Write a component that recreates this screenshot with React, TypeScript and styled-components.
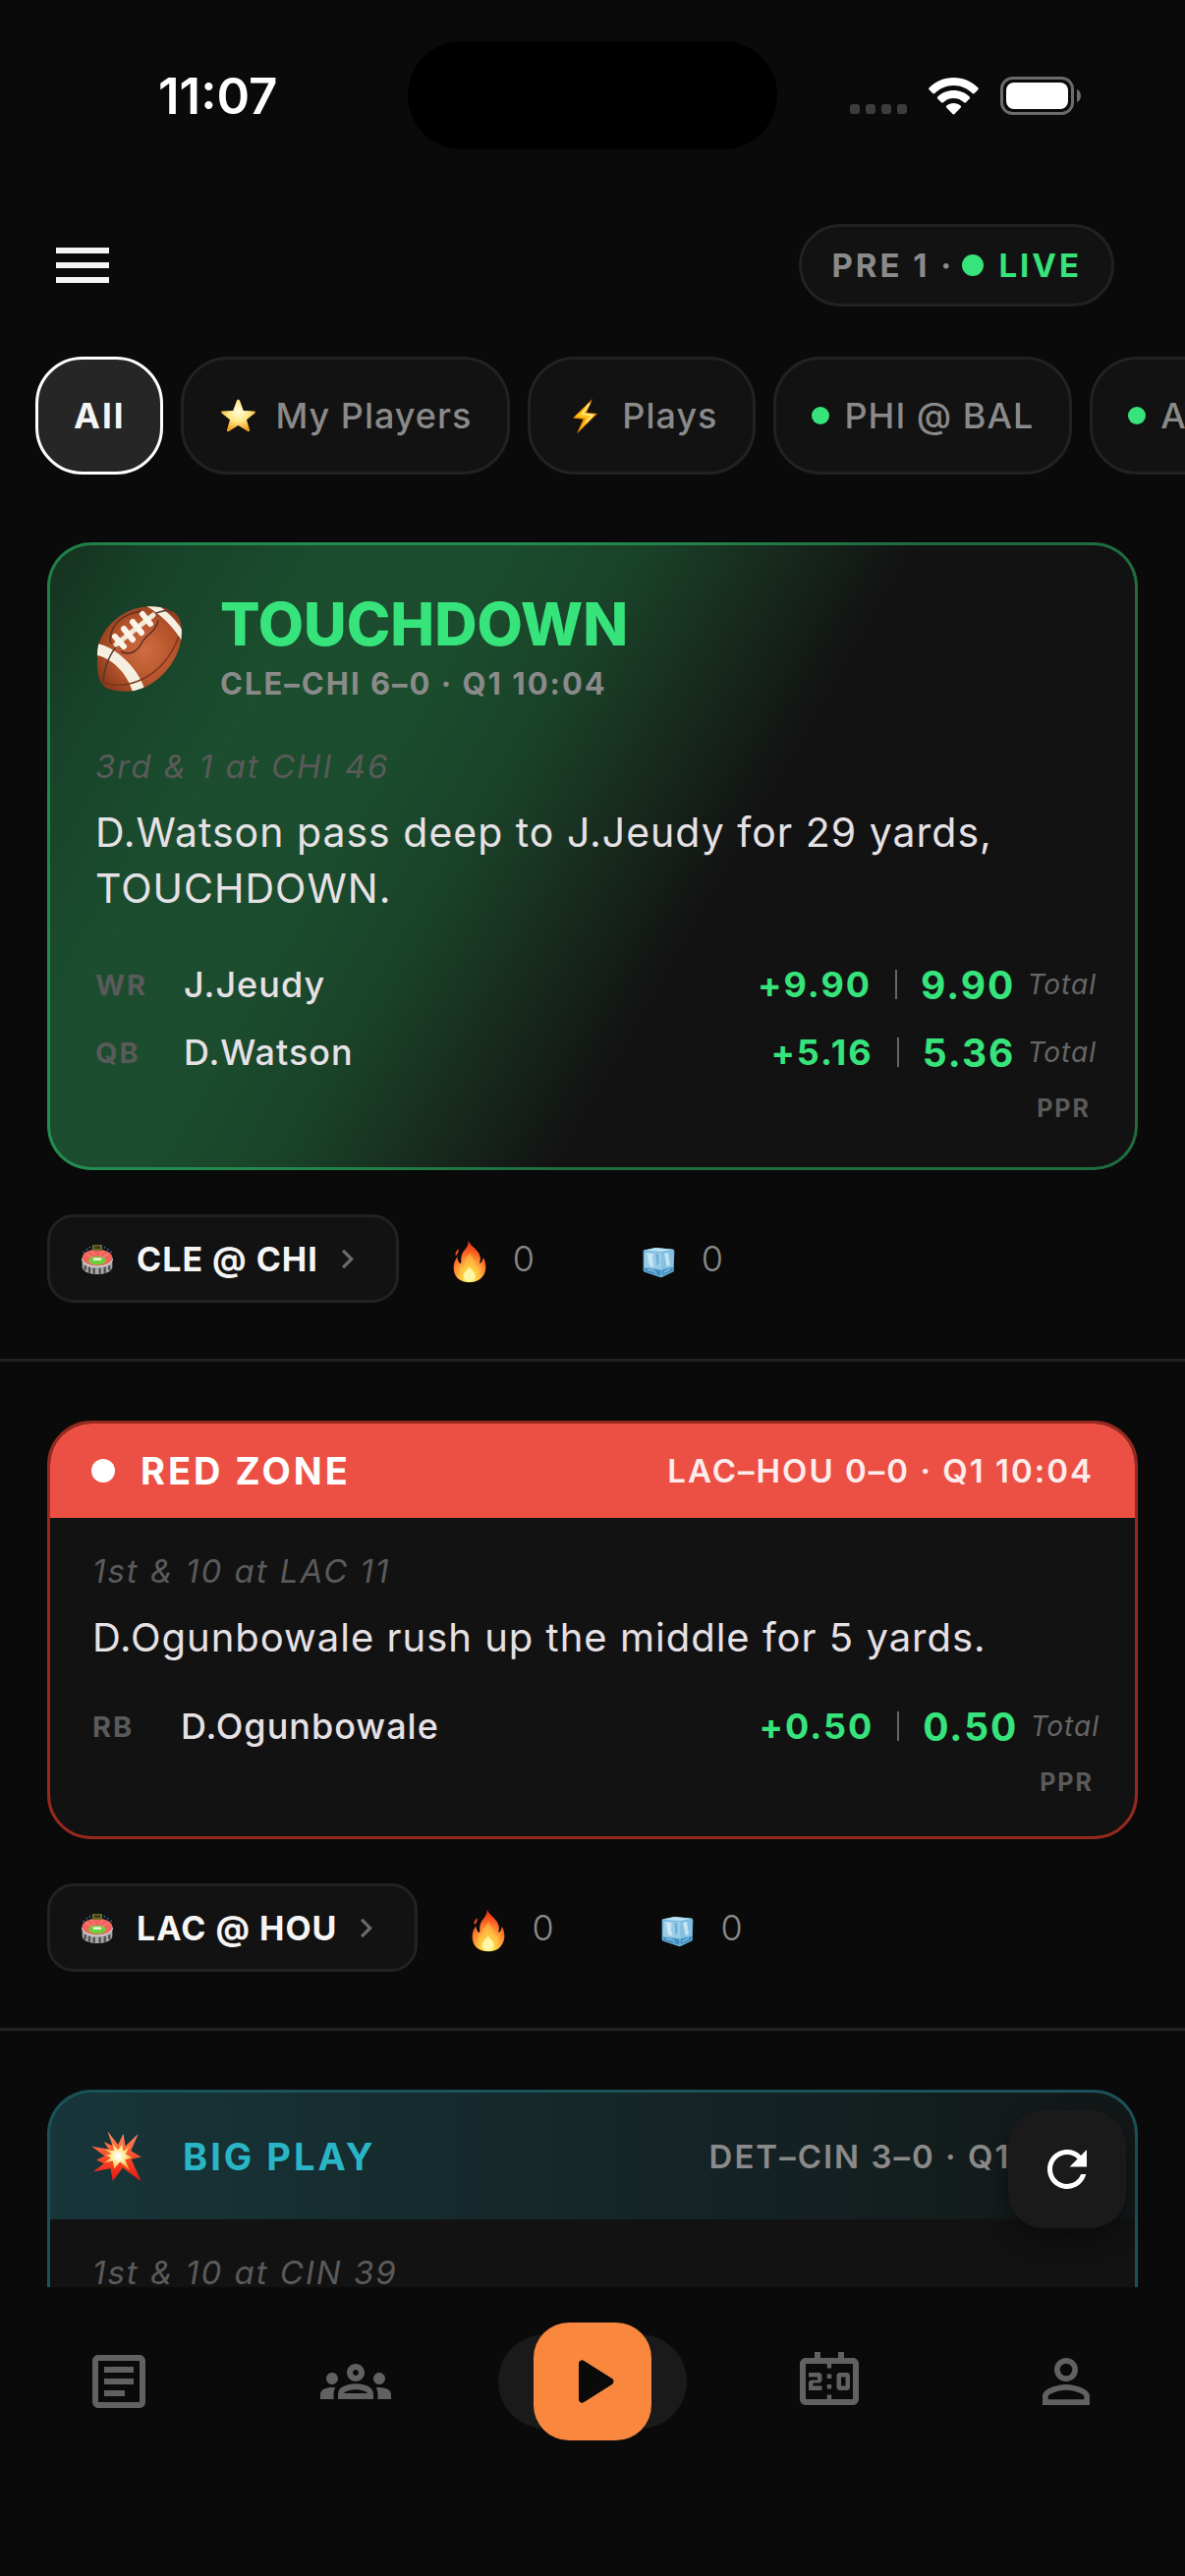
import React from 'react';
import styled, { createGlobalStyle, css } from 'styled-components';
import {
  MdChevronRight,
  MdMenu,
  MdOutlineArticle,
  MdOutlineGroups,
  MdOutlinePersonOutline,
  MdOutlineScoreboard,
  MdRefresh,
} from 'react-icons/md';

type Tone = 'touchdown' | 'redzone' | 'bigplay';

interface PlayerLine {
  position: string;
  name: string;
  gain: string;
  total: string;
}

interface Play {
  id: string;
  tone: Tone;
  title: string;
  score: string;
  situation: string;
  description: string;
  players: PlayerLine[];
  game: string;
}

const plays: Play[] = [
  {
    id: 'td',
    tone: 'touchdown',
    title: 'TOUCHDOWN',
    score: 'CLE–CHI 6–0 · Q1 10:04',
    situation: '3rd & 1 at CHI 46',
    description: 'D.Watson pass deep to J.Jeudy for 29 yards, TOUCHDOWN.',
    players: [
      { position: 'WR', name: 'J.Jeudy', gain: '+9.90', total: '9.90' },
      { position: 'QB', name: 'D.Watson', gain: '+5.16', total: '5.36' },
    ],
    game: 'CLE @ CHI',
  },
  {
    id: 'rz',
    tone: 'redzone',
    title: 'RED ZONE',
    score: 'LAC–HOU 0–0 · Q1 10:04',
    situation: '1st & 10 at LAC 11',
    description: 'D.Ogunbowale rush up the middle for 5 yards.',
    players: [{ position: 'RB', name: 'D.Ogunbowale', gain: '+0.50', total: '0.50' }],
    game: 'LAC @ HOU',
  },
  {
    id: 'bp',
    tone: 'bigplay',
    title: 'BIG PLAY',
    score: 'DET–CIN 3–0 · Q1 9:51',
    situation: '1st & 10 at CIN 39',
    description: '',
    players: [],
    game: 'DET @ CIN',
  },
];

const colors = {
  bg: '#0a0a0a',
  surface: '#121212',
  raised: '#1a1a1a',
  line: '#222222',
  text: '#e6e1e5',
  bright: '#f5f5f5',
  muted: '#8a8a8a',
  dim: '#5a5a5a',
  green: '#37e37b',
  red: '#ec5045',
  cyan: '#2ab5c6',
  orange: '#f9873e',
};

const GlobalStyle = createGlobalStyle`
  * {
    box-sizing: border-box;
  }

  body {
    margin: 0;
    background: ${colors.bg};
    color: ${colors.text};
    font-family: Inter, 'Liberation Sans', sans-serif;
  }

  button {
    font-family: inherit;
    margin: 0;
    cursor: pointer;
  }

  svg {
    display: block;
    flex: none;
  }
`;

const Screen = styled.div`
  display: flex;
  flex-direction: column;
  height: 100vh;
  overflow: hidden;
`;

/* ---- Status bar ---- */

const StatusBar = styled.div`
  display: grid;
  grid-template-columns: 1fr auto 1fr;
  align-items: center;
  flex: none;
  height: 186px;
  padding: 42px 0 34px;
`;

const Clock = styled.time`
  padding-left: 161px;
  color: #ffffff;
  font-size: 51px;
  font-weight: 600;
`;

const Island = styled.div`
  width: 376px;
  height: 110px;
  border-radius: 55px;
  background: #000000;
`;

const StatusIcons = styled.div`
  display: flex;
  align-items: flex-end;
  justify-content: flex-end;
  gap: 22px;
  padding-right: 106px;
`;

/* ---- Header ---- */

const Header = styled.header`
  display: flex;
  align-items: center;
  justify-content: space-between;
  flex: none;
  height: 168px;
  padding: 0 72px 0 48px;
`;

const MenuButton = styled.button`
  padding: 0;
  border: 0;
  background: none;
  color: ${colors.bright};
  font-size: 72px;
`;

const LivePill = styled.div`
  display: flex;
  align-items: center;
  height: 84px;
  padding: 0 30px;
  border: 3px solid ${colors.line};
  border-radius: 42px;
  background: ${colors.surface};
  color: ${colors.muted};
  font-size: 33px;
  font-weight: 700;
  letter-spacing: 3px;
`;

const LiveDot = styled.span<{ $size: number }>`
  flex: none;
  width: ${(p) => p.$size}px;
  height: ${(p) => p.$size}px;
  border-radius: 50%;
  background: ${colors.green};
`;

const LiveLabel = styled.span`
  display: flex;
  align-items: center;
  gap: 15px;
  margin-left: 8px;
  color: ${colors.green};
`;

/* ---- Filter chips ---- */

const Chips = styled.div`
  display: flex;
  flex: none;
  gap: 18px;
  margin-top: 9px;
  padding-left: 36px;
  overflow: hidden;
`;

const Chip = styled.button<{ $active?: boolean; $live?: boolean }>`
  display: flex;
  align-items: center;
  flex: none;
  gap: ${(p) => (p.$live ? 15 : 18)}px;
  height: 120px;
  padding: 0 36px;
  border: 3px solid ${(p) => (p.$active ? '#ffffff' : colors.line)};
  border-radius: 48px;
  background: ${(p) => (p.$active ? '#262626' : colors.surface)};
  color: ${(p) => (p.$active ? colors.bright : colors.muted)};
  font-size: 36px;
  font-weight: ${(p) => (p.$active ? 700 : 500)};
  letter-spacing: ${(p) => (p.$active ? 2 : 1)}px;
  white-space: nowrap;
`;

/* ---- Feed ---- */

const FeedArea = styled.main`
  position: relative;
  flex: 1;
  min-height: 0;
  overflow: hidden;
`;

const Feed = styled.div`
  padding-top: 69px;
`;

const FeedItem = styled.section`
  margin-bottom: 60px;
  padding: 0 48px 57px;
  border-bottom: 3px solid ${colors.line};
`;

const cardTones = {
  touchdown: css`
    border-color: rgba(46, 220, 120, 0.45);
    background: linear-gradient(
        120deg,
        #15301f 0%,
        #18432a 9%,
        #1b4d2e 20%,
        #1b4c2d 32%,
        #1a4229 41%,
        #17291d 51%,
        #121212 60%
      )
      border-box;
  `,
  redzone: css`
    border-color: #97291f;
    background: ${colors.surface};
  `,
  bigplay: css`
    border-color: rgba(42, 181, 198, 0.4);
    background: ${colors.surface};
  `,
};

const Card = styled.article<{ $tone: Tone }>`
  overflow: hidden;
  border: 3px solid;
  border-radius: 45px;
  ${(p) => cardTones[p.$tone]}
`;

const TouchdownHeader = styled.div`
  display: flex;
  align-items: center;
  gap: 38px;
  padding: 45px 48px 0;

  svg {
    margin-top: 5px;
  }
`;

const TouchdownTitle = styled.h2`
  margin: 0 0 6px;
  color: ${colors.green};
  font-size: 60px;
  font-weight: 800;
  line-height: 70px;
`;

const TouchdownScore = styled.div`
  color: ${colors.muted};
  font-size: 31px;
  font-weight: 700;
  letter-spacing: 2px;
  line-height: 40px;
`;

const Banner = styled.div<{ $tone: Tone }>`
  display: flex;
  align-items: center;
  justify-content: space-between;
  height: ${(p) => (p.$tone === 'redzone' ? 96 : 129)}px;
  padding: 0 42px;
  background: ${(p) =>
    p.$tone === 'redzone'
      ? colors.red
      : 'linear-gradient(90deg, rgba(42, 181, 198, 0.22), rgba(42, 181, 198, 0.03))'};
`;

const BannerTitle = styled.h2<{ $tone: Tone }>`
  display: flex;
  align-items: center;
  gap: ${(p) => (p.$tone === 'redzone' ? 26 : 42)}px;
  margin: 0;
  color: ${(p) => (p.$tone === 'redzone' ? '#ffffff' : colors.cyan)};
  font-size: 38px;
  font-weight: 700;
  letter-spacing: 3px;
`;

const BannerDot = styled.span`
  width: 24px;
  height: 24px;
  border-radius: 50%;
  background: #ffffff;
`;

const BannerScore = styled.div<{ $tone: Tone }>`
  color: ${(p) => (p.$tone === 'redzone' ? '#fdeceb' : colors.muted)};
  font-size: 33px;
  font-weight: 600;
  letter-spacing: 2px;
`;

const Body = styled.div<{ $tone: Tone }>`
  padding: ${(p) => (p.$tone === 'touchdown' ? '43px 45px 45px 46px' : '33px 42px 40px 43px')};
`;

const Situation = styled.p`
  margin: 0 0 18px;
  color: ${colors.dim};
  font-size: 33px;
  font-style: italic;
  letter-spacing: 2px;
  line-height: 42px;
`;

const Description = styled.p<{ $large: boolean }>`
  margin: 0;
  font-size: ${(p) => (p.$large ? 41 : 40)}px;
  letter-spacing: 1px;
  line-height: 57px;
`;

const PlayerList = styled.ul<{ $large: boolean }>`
  display: flex;
  flex-direction: column;
  gap: 21px;
  margin: ${(p) => (p.$large ? 45 : 38)}px -6px 18px 0;
  padding: 0;
  list-style: none;
`;

const PlayerRow = styled.li`
  display: flex;
  align-items: center;
  height: 48px;
`;

const Position = styled.span`
  width: 90px;
  color: ${colors.dim};
  font-size: 29px;
  font-weight: 700;
  letter-spacing: 2px;
`;

const PlayerName = styled.span`
  flex: 1;
  font-size: 36px;
  font-weight: 500;
  letter-spacing: 1px;
`;

const Gain = styled.span`
  color: ${colors.green};
  font-size: 36px;
  font-weight: 700;
  letter-spacing: 2px;
`;

const Separator = styled.span`
  width: 2px;
  height: 30px;
  margin: 0 24px;
  background: #666666;
`;

const Total = styled.span`
  color: ${colors.green};
  font-size: 39px;
  font-weight: 700;
  letter-spacing: 2px;
`;

const TotalLabel = styled.span`
  margin-left: 12px;
  color: #666666;
  font-size: 28px;
  font-style: italic;
  letter-spacing: 1px;
`;

const Scoring = styled.div`
  color: ${colors.dim};
  font-size: 25px;
  font-weight: 700;
  letter-spacing: 2px;
  line-height: 30px;
  text-align: right;
`;

/* ---- Card actions ---- */

const Actions = styled.div`
  display: flex;
  margin-top: 45px;
`;

const GameButton = styled.button`
  display: flex;
  align-items: center;
  height: 90px;
  padding: 0 30px;
  border: 3px solid ${colors.line};
  border-radius: 27px;
  background: ${colors.surface};
  color: ${colors.bright};
  font-size: 34px;
  font-weight: 700;
  letter-spacing: 1px;
`;

const GameName = styled.span`
  margin: 0 10px 0 22px;
`;

const Chevron = styled(MdChevronRight)`
  color: #6a6a6a;
  font-size: 39px;
`;

const Reaction = styled.button`
  display: flex;
  align-items: center;
  gap: 20px;
  min-width: 192px;
  padding: 0 0 0 48px;
  border: 0;
  background: none;
  color: ${colors.muted};
  font-size: 36px;
  font-weight: 300;

  svg {
    margin-top: 5px;
  }
`;

const RefreshButton = styled.button`
  position: absolute;
  right: 60px;
  bottom: 60px;
  display: flex;
  align-items: center;
  justify-content: center;
  width: 120px;
  height: 120px;
  padding: 0;
  border: 0;
  border-radius: 36px;
  background: ${colors.raised};
  box-shadow: 0 12px 24px rgba(0, 0, 0, 0.4);
  color: #ffffff;
  font-size: 60px;
`;

/* ---- Bottom navigation ---- */

const BottomNav = styled.nav`
  display: grid;
  grid-template-columns: repeat(5, 1fr);
  align-items: center;
  justify-items: center;
  flex: none;
  height: 294px;
  padding-bottom: 102px;
  background: ${colors.bg};
`;

const NavLink = styled.a`
  color: #616161;
  font-size: 72px;
`;

const PlayLink = styled.a`
  display: flex;
  align-items: center;
  justify-content: center;
  width: 192px;
  height: 96px;
  border-radius: 48px;
  background: ${colors.raised};
`;

const PlayTile = styled.span`
  display: flex;
  align-items: center;
  justify-content: center;
  flex: none;
  width: 120px;
  height: 120px;
  border-radius: 36px;
  background: ${colors.orange};
`;

/* ---- Drawings ---- */

const SignalDots = () => (
  <svg width="58" height="11" viewBox="0 0 58 11" fill="#3c3c3c" aria-hidden="true">
    {[0, 16, 32, 48].map((x) => (
      <rect key={x} x={x} y="0" width="10" height="10" rx="3" />
    ))}
  </svg>
);

const Wifi = () => (
  <svg width="51" height="38" viewBox="0 0 51 38" fill="#ffffff" aria-hidden="true">
    <path d="M25.500 0C35.500 0 44 4 50.300 10.200c.7.700.7 1.400.1 2L46.700 16c-.6.600-1.400.600-2 0C39.600 11.200 33 8 25.500 8S11.400 11.200 6.300 16c-.6.600-1.400.600-2 0L.6 12.200c-.6-.6-.6-1.300.1-2C7 4 15.500 0 25.500 0z" />
    <path d="M25.500 13c6.300 0 12 2.400 16.200 6.400.6.600.6 1.400 0 2L38 25.200c-.6.600-1.300.600-2 0C33.200 22.600 29.500 21 25.500 21S17.800 22.600 15 25.200c-.7.600-1.400.600-2 0l-3.700-3.800c-.6-.6-.6-1.400 0-2C13.500 15.400 19.200 13 25.500 13z" />
    <path d="M25.500 26c2.800 0 5.200 1 7.100 2.600.7.600.7 1.400.1 2l-6.200 6.400c-.6.600-1.400.600-2 0l-6.200-6.400c-.6-.6-.6-1.400.1-2C20.300 27 22.700 26 25.500 26z" />
  </svg>
);

const Battery = () => (
  <svg width="82" height="39" viewBox="0 0 82 39" aria-hidden="true">
    <rect x="1.500" y="1.500" width="72" height="36" rx="11" fill="none" stroke="#6b6b6b" strokeWidth="3" />
    <rect x="6" y="6" width="63" height="27" rx="8" fill="#ffffff" />
    <path d="M78 13c2.600 1.200 4 3.600 4 6.500s-1.400 5.300-4 6.500z" fill="#6b6b6b" />
  </svg>
);

const Star = () => (
  <svg width="39" height="39" viewBox="0 0 39 39" aria-hidden="true">
    <defs>
      <radialGradient id="star" cx="50%" cy="38%" r="60%">
        <stop offset="0" stopColor="#fffbe0" />
        <stop offset=".5" stopColor="#ffe98a" />
        <stop offset="1" stopColor="#f2a31b" />
      </radialGradient>
    </defs>
    <path
      d="M19.500 2.500c.8 0 1.300.8 1.700 1.800L24.800 14l10.400.4c1.700.1 2.200 1.200 1 2.300L28 23.200l3 10.200c.4 1.600-.5 2.400-1.900 1.500L19.500 29l-9.600 5.900c-1.400.9-2.300.1-1.900-1.500l3-10.200-8.200-6.500c-1.200-1.100-.7-2.200 1-2.300l10.400-.4 3.600-9.700c.4-1 .9-1.800 1.700-1.800z"
      fill="url(#star)"
    />
  </svg>
);

const Bolt = () => (
  <svg width="39" height="39" viewBox="0 0 39 39" aria-hidden="true">
    <path d="M27 2 7 21.500l10.500 1.200L11 37.500 32 17l-11-1z" fill="#f08c00" />
    <path d="M25.500 4.500 9.500 20.200l11 1.300L14 33.500l15-15.300-11.500-1z" fill="#ffc61a" />
    <path d="m24 6.500-7 10.700 10.500 1.200-7 7.600" fill="none" stroke="#fff3a0" strokeWidth="1.500" />
  </svg>
);

const Football = () => (
  <svg width="87" height="87" viewBox="0 0 87 87" aria-hidden="true">
    <defs>
      <radialGradient id="leather" cx="55%" cy="52%" r="58%">
        <stop offset="0" stopColor="#cf6c40" />
        <stop offset=".65" stopColor="#b4532b" />
        <stop offset="1" stopColor="#8f3c1c" />
      </radialGradient>
      <clipPath id="ball">
        <path d="M1 40C6 21 26 2 50 .5 64-.5 77 3 82 10c6 9 5 27-2 41-9 18-26 33-46 35.500C20 87.500 8 85 4 78-1 69-1 50 1 40z" />
      </clipPath>
    </defs>
    <g clipPath="url(#ball)">
      <rect width="87" height="87" fill="url(#leather)" />
      <path d="M0 38C20 42 42 64 48 84l-12 4C32 70 15 53 0 50z" fill="#f6efe0" />
      <path d="M50 0c14 8 28 21 37 37V25C81 15 72 6 62-1z" fill="#f6efe0" />
      <path d="M6 78c1-20 8-32 18-42M55 9c8-4 18-6 26-3" fill="none" stroke="#4d3a38" strokeWidth="1.500" />
      <path d="M15 38c-5-2 0-18 8-24 6-5 14-8 22-9M24 46c10 6 18-2 22-10 4-7 15-11 16-22" fill="none" stroke="#5f2f22" strokeWidth="1.500" />
      <path d="M3 77c28 10 64-4 80-46" fill="none" stroke="#7d3519" strokeWidth="1.500" />
      <path d="M19 39 57 9" stroke="#efe6d3" strokeWidth="5" strokeLinecap="round" />
      <path d="m18 31 9 10M27 23l9 11M36 16l9 11M46 8l8 10" stroke="#fbf5e8" strokeWidth="6" strokeLinecap="round" />
    </g>
  </svg>
);

const Boom = () => (
  <svg width="51" height="52" viewBox="0 0 150 155" aria-hidden="true">
    <defs>
      <linearGradient id="boom" x1="0" y1="0" x2="0" y2="1">
        <stop offset="0" stopColor="#ff8f6b" />
        <stop offset=".5" stopColor="#f4502a" />
        <stop offset="1" stopColor="#e81414" />
      </linearGradient>
      <radialGradient id="flash" cx="50%" cy="50%" r="50%">
        <stop offset=".1" stopColor="#ffffff" />
        <stop offset=".5" stopColor="#ffe993" />
        <stop offset="1" stopColor="#ffa62b" />
      </radialGradient>
    </defs>
    <path
      d="m48 1 32 41L96 8l6 38 39-37-22 51 31 19-30 7 30 67-56-41-30 40-7-38-53 10 33-25-23-11 25-12L0 47l51 8-14-22 26 12z"
      fill="url(#boom)"
    />
    <path
      d="m62 34 18 24 12-20 4 24 20-18-13 26 20 11-22 6 14 32-29-25-18 21-4-24-26 6 20-16-16-7 18-5-22-14 30 5z"
      fill="url(#flash)"
    />
  </svg>
);

const Stadium = () => (
  <svg width="36" height="36" viewBox="0 0 108 108" aria-hidden="true">
    <path d="M8 52v28c0 12 20 22 46 22s46-10 46-22V52z" fill="#a9a9a9" />
    <path
      d="M17 76v14M30 80v18M44 83v18M62 83v18M77 80v18M91 76v14"
      stroke="#4d4d4d"
      strokeWidth="7"
    />
    <path d="M8 54c0 14 20 25 46 25s46-11 46-25" fill="none" stroke="#d0d0d0" strokeWidth="4" />
    <ellipse cx="54" cy="51" rx="46" ry="25" fill="#f0645c" />
    <ellipse cx="54" cy="60" rx="27" ry="13" fill="#6fce3c" />
    <path d="M42 52h24v8H42z" fill="#e8f5df" />
    <path d="m20 40 20 12M88 40 68 52M36 30l10 14M72 30 62 44" stroke="#ffa39c" strokeWidth="2" />
    <path d="M39 12h30v18H39z" fill="#6f6a24" />
    <path d="M45 16h18v8H45z" fill="#3a3a1c" />
    <path d="M12 34h1M22 26h1M31 20h1M76 20h1M86 26h1M96 34h1" stroke="#1f6d99" strokeWidth="5" strokeLinecap="round" />
  </svg>
);

const Fire = () => (
  <svg width="48" height="48" viewBox="-22 -4 144 144" aria-hidden="true">
    <defs>
      <radialGradient id="flame" cx="50%" cy="88%" r="82%">
        <stop offset="0" stopColor="#fffbd0" />
        <stop offset=".22" stopColor="#ffe14a" />
        <stop offset=".48" stopColor="#ffa13a" />
        <stop offset=".75" stopColor="#fb5d22" />
        <stop offset="1" stopColor="#ee3418" />
      </radialGradient>
    </defs>
    <path
      d="M46 4c8 20 36 30 37 56 0 6-3 10-2 14 6-2 9-10 10-19 6 9 9 22 8 34-2 26-22 43-50 43C20 132 2 116 1 90 0 76 5 64 12 54c1 10 4 18 10 21 4-5 0-14 3-25 4-16 22-24 21-46z"
      fill="url(#flame)"
    />
    <path d="M16 30c1 9-2 15-8 21-4-8 1-16 8-21z" fill="#ee4a22" />
    <path d="M50 38c2 14 16 22 16 40 0 8-4 12 0 16 6 0 10-6 12-12 4 30-8 44-28 44S18 112 22 86c4 6 8 8 12 6 6-12-4-18 4-32 4-8 12-12 12-22z" fill="#ffc440" opacity=".55" />
    <path d="M49 82c3 12 18 16 18 30 0 10-8 16-18 16s-18-6-18-16c0-12 15-18 18-30z" fill="#fff6a8" />
  </svg>
);

const Ice = () => (
  <svg width="48" height="48" viewBox="-24 -24 144 144" aria-hidden="true">
    <path d="M2 14 40 6l54 5q3 1 3 6l-2 62-36 17q-3 1-6 0L6 80q-4-1-4-6z" fill="#6fb4dc" />
    <path d="M2 14 40 6l54 5-37 8z" fill="#b8e2f4" />
    <path d="M6 19l50 3v50L6 66z" fill="#9accE6" />
    <path d="m60 22 33-7v50L60 72z" fill="#85c0e2" />
    <path d="M12 22c8 14 2 28 12 42h12c-8-14-6-28-4-40zM66 24l8 40 10-4-6-40z" fill="#d3ecf6" opacity=".8" />
    <path d="m40 24 4 40 6-14-2-25z" fill="#6aaedb" />
    <path d="m6 68 51 7 36-9-2 11-35 15-48-13z" fill="#3f8cc0" />
    <path d="m14 74 20 2 8 9M64 82l20-10" fill="none" stroke="#a9dcf5" strokeWidth="3" />
    <path d="M57 20v72" stroke="#b4dff3" strokeWidth="2" />
  </svg>
);

const PlayGlyph = () => (
  <svg width="84" height="84" viewBox="0 0 24 24" fill="#0a0a0a" aria-hidden="true">
    <path d="M8 6.820v10.360c0 .79.87 1.270 1.540.84l8.140-5.180c.62-.39.62-1.290 0-1.690L9.540 5.980C8.870 5.550 8 6.030 8 6.820z" />
  </svg>
);

/* ---- Components ---- */

const CardHeader: React.FC<{ play: Play }> = ({ play }) => {
  if (play.tone === 'touchdown') {
    return (
      <TouchdownHeader>
        <Football />
        <div>
          <TouchdownTitle>{play.title}</TouchdownTitle>
          <TouchdownScore>{play.score}</TouchdownScore>
        </div>
      </TouchdownHeader>
    );
  }

  return (
    <Banner $tone={play.tone}>
      <BannerTitle $tone={play.tone}>
        {play.tone === 'redzone' ? <BannerDot /> : <Boom />}
        {play.title}
      </BannerTitle>
      <BannerScore $tone={play.tone}>{play.score}</BannerScore>
    </Banner>
  );
};

const PlayItem: React.FC<{ play: Play }> = ({ play }) => {
  const large = play.tone === 'touchdown';

  return (
    <FeedItem>
      <Card $tone={play.tone}>
        <CardHeader play={play} />
        <Body $tone={play.tone}>
          <Situation>{play.situation}</Situation>
          {play.description && <Description $large={large}>{play.description}</Description>}
          {play.players.length > 0 && (
            <>
              <PlayerList $large={large}>
                {play.players.map((player) => (
                  <PlayerRow key={player.name}>
                    <Position>{player.position}</Position>
                    <PlayerName>{player.name}</PlayerName>
                    <Gain>{player.gain}</Gain>
                    <Separator />
                    <Total>{player.total}</Total>
                    <TotalLabel>Total</TotalLabel>
                  </PlayerRow>
                ))}
              </PlayerList>
              <Scoring>PPR</Scoring>
            </>
          )}
        </Body>
      </Card>
      {play.players.length > 0 && (
        <Actions>
          <GameButton type="button">
            <Stadium />
            <GameName>{play.game}</GameName>
            <Chevron />
          </GameButton>
          <Reaction type="button" aria-label="Hot, 0">
            <Fire />0
          </Reaction>
          <Reaction type="button" aria-label="Cold, 0">
            <Ice />0
          </Reaction>
        </Actions>
      )}
    </FeedItem>
  );
};

const App: React.FC = () => (
  <Screen>
    <GlobalStyle />
    <StatusBar>
      <Clock>11:07</Clock>
      <Island />
      <StatusIcons>
        <SignalDots />
        <Wifi />
        <Battery />
      </StatusIcons>
    </StatusBar>

    <Header>
      <MenuButton type="button" aria-label="Menu">
        <MdMenu />
      </MenuButton>
      <LivePill>
        PRE 1 ·
        <LiveLabel>
          <LiveDot $size={22} />
          LIVE
        </LiveLabel>
      </LivePill>
    </Header>

    <Chips>
      <Chip type="button" aria-pressed="true" $active>
        All
      </Chip>
      <Chip type="button">
        <Star />
        My Players
      </Chip>
      <Chip type="button">
        <Bolt />
        Plays
      </Chip>
      <Chip type="button" $live>
        <LiveDot $size={18} />
        PHI @ BAL
      </Chip>
      <Chip type="button" $live>
        <LiveDot $size={18} />
        ATL @ DET
      </Chip>
    </Chips>

    <FeedArea>
      <Feed>
        {plays.map((play) => (
          <PlayItem key={play.id} play={play} />
        ))}
      </Feed>
      <RefreshButton type="button" aria-label="Refresh">
        <MdRefresh />
      </RefreshButton>
    </FeedArea>

    <BottomNav>
      <NavLink href="#news" aria-label="News">
        <MdOutlineArticle />
      </NavLink>
      <NavLink href="#leagues" aria-label="Leagues">
        <MdOutlineGroups />
      </NavLink>
      <PlayLink href="#plays" aria-label="Plays">
        <PlayTile>
          <PlayGlyph />
        </PlayTile>
      </PlayLink>
      <NavLink href="#scores" aria-label="Scores">
        <MdOutlineScoreboard />
      </NavLink>
      <NavLink href="#profile" aria-label="Profile">
        <MdOutlinePersonOutline />
      </NavLink>
    </BottomNav>
  </Screen>
);

export default App;
